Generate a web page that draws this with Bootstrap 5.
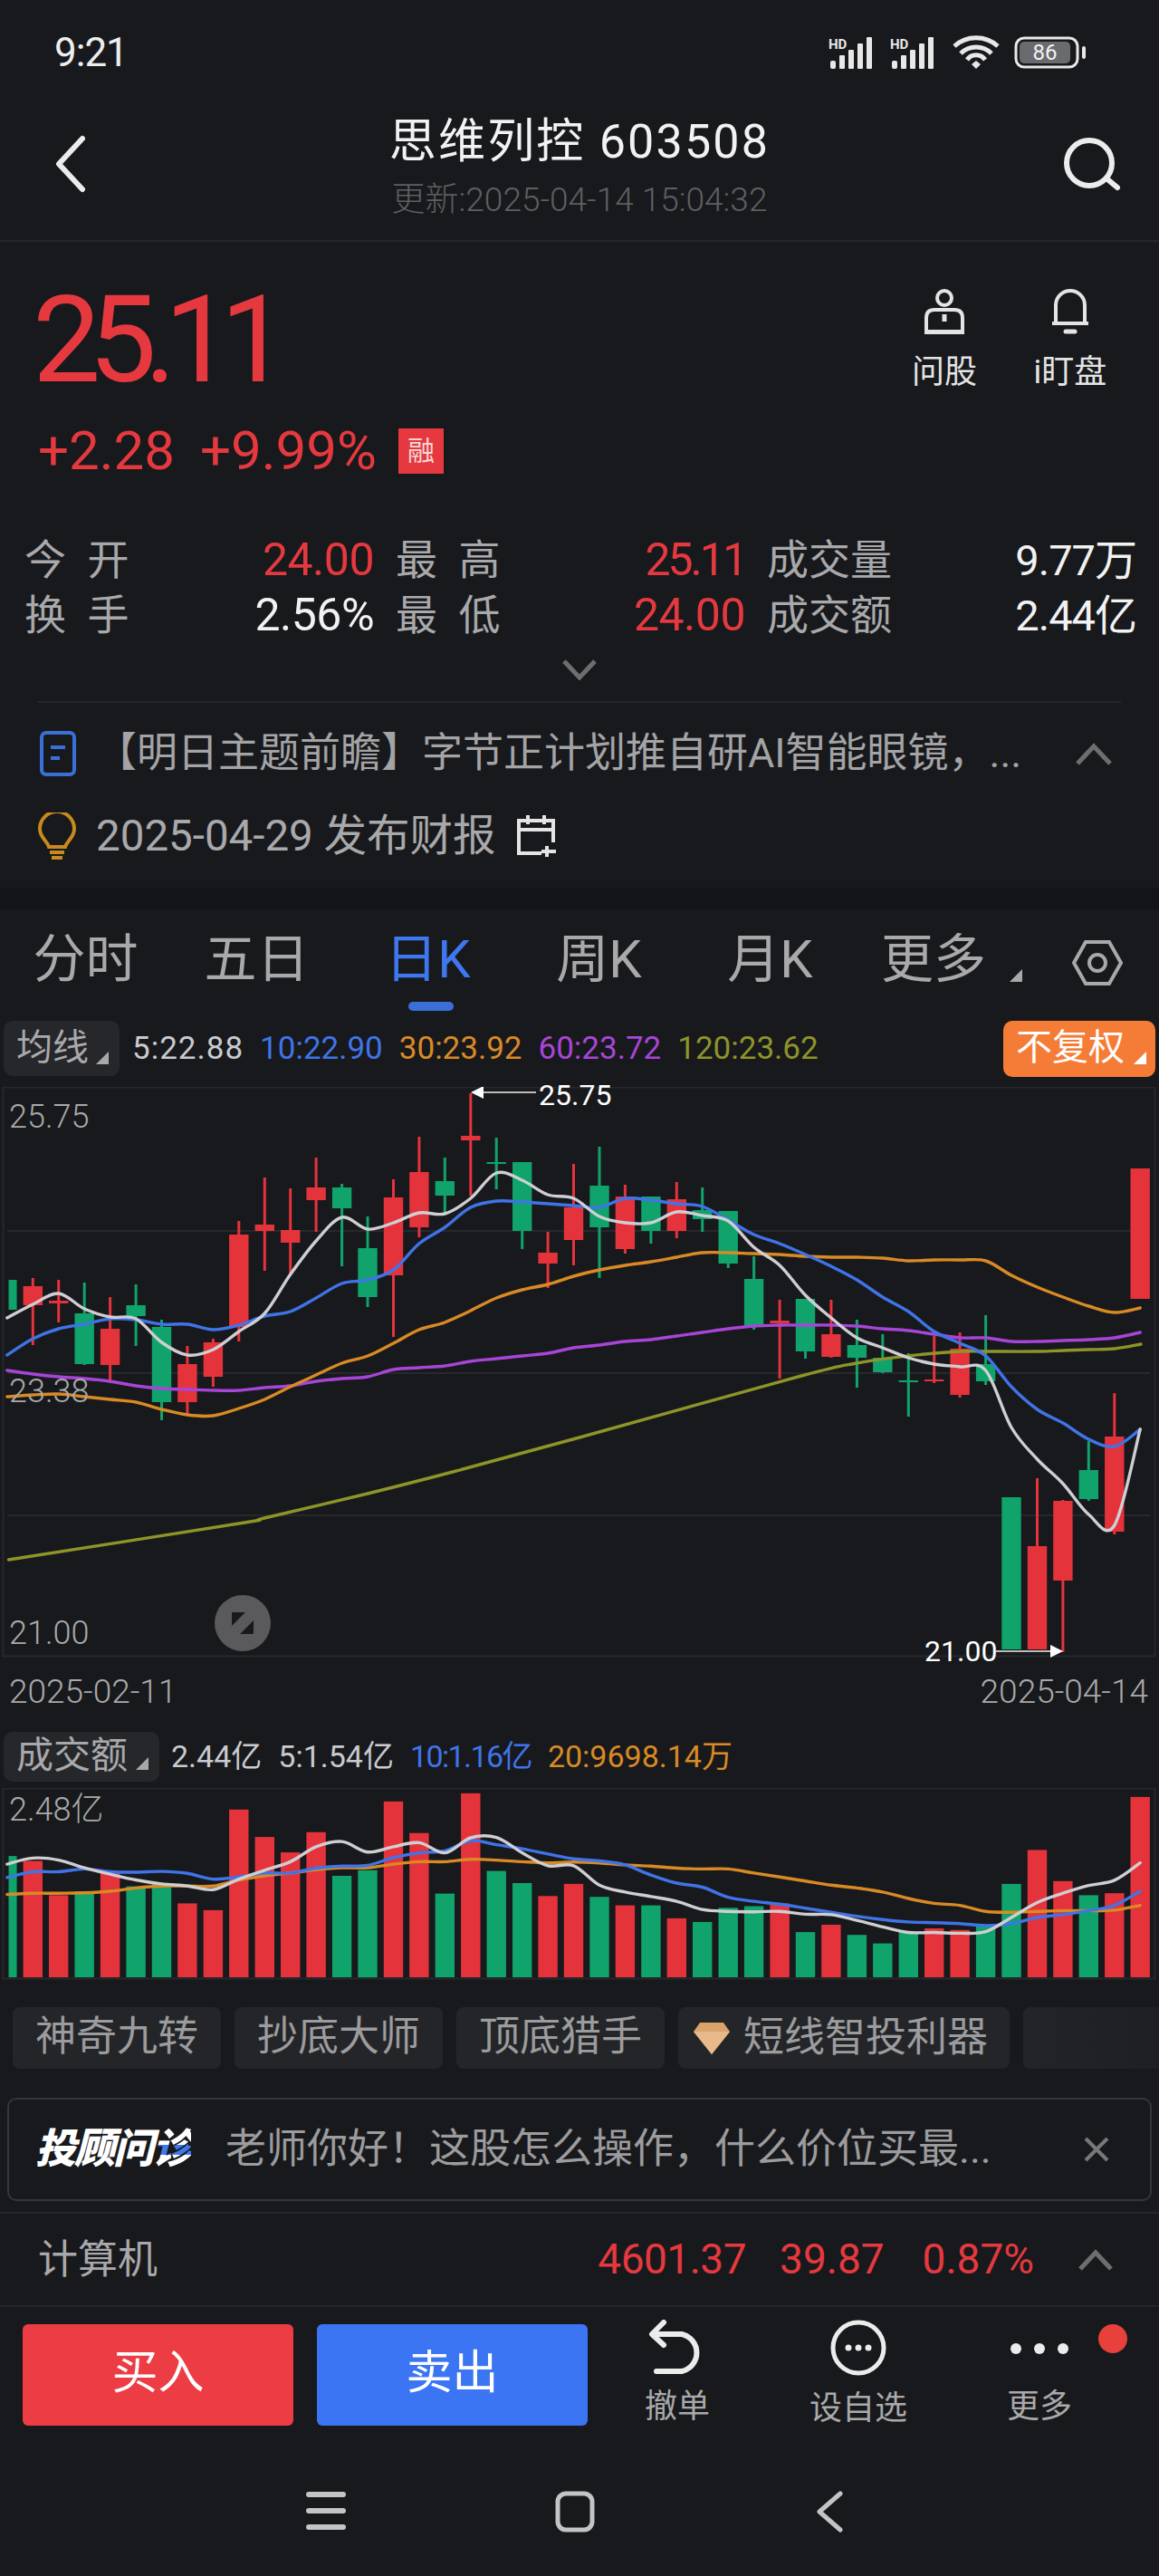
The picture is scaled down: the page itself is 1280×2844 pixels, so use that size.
<!DOCTYPE html>
<html lang="zh-CN">
<head>
<meta charset="UTF-8">
<meta name="viewport" content="width=device-width, initial-scale=1.0">
<title>思维列控 603508</title>
<link href="https://cdn.jsdelivr.net/npm/bootstrap@5.3.2/dist/css/bootstrap.min.css" rel="stylesheet">
<style>
  body { background:#18191c; color:#a9a9ab; font-family:Roboto,"Noto Sans CJK SC",sans-serif; font-weight:300; width:1280px; height:2844px; overflow:hidden; }
  .txt-red { color:#e5393f; }
  .txt-white { color:#f2f2f2; }
  .status-bar { height:122px; padding:0 80px 6px 60px; color:#eee; font-size:44px; font-weight:400; letter-spacing:-1px; }
  .app-head { height:145px; padding:0 42px 26px 58px; border-bottom:2px solid #25262a; position:relative; }
  .head-title { position:absolute; left:0; right:0; top:3px; text-align:center; color:#f2f2f2; font-size:52px; line-height:64px; font-weight:400; letter-spacing:2.2px; }
  .head-sub { position:absolute; left:0; right:0; top:79px; text-align:center; color:#5e5f62; font-size:37px; line-height:40px; }
  .price-wrap { height:320px; padding:32px 42px 0; position:relative; }
  .big-price { font-size:134px; line-height:134px; letter-spacing:-13.5px; height:134px; margin:10px 0 0 -6px; font-weight:400; }
  .price-chg { font-size:60px; line-height:64px; margin-top:23px; gap:28px; font-weight:400; }
  .rong-tag { width:50px; height:50px; background:#e5393f; color:#f6d7d7; font-size:30px; line-height:50px; text-align:center; margin-left:-4px; }
  .top-acts { position:absolute; right:52px; top:52px; gap:47px; }
  .top-act { width:92px; color:#e4e4e4; font-size:36px; line-height:44px; text-align:center; font-weight:400; }
  .top-act svg { display:block; margin:0 auto 18px; }
  .stat-grid { display:grid; grid-template-columns:386px 386px 408px; column-gap:24px; padding-left:27px; font-size:46px; line-height:61px; margin-top:1px; font-weight:400; }
  .stat-cell { display:flex; justify-content:space-between; }
  .stat-num { font-size:50px; letter-spacing:-.5px; }
  .num-tight { letter-spacing:-3px; }
  .num-last { font-size:47px; letter-spacing:-1px; }
  .sp { word-spacing:12px; }
  .more-row { height:64px; padding-top:17px; }
  .news-block { margin:0 42px; border-top:2px solid #25262a; height:206px; font-size:45px; font-weight:400; }
  .news-line { height:100px; padding-top:22px; white-space:nowrap; }
  .news-line .doc-ico { margin-top:9px; }
  .news-text { margin-left:-14px; width:1070px; color:#a4a4a6; }
  .news-fold { margin:22px 10px 0 0; }
  .fin-line { gap:22px; font-size:47.5px; line-height:56px; margin-top:19px; }
  .dark-band { height:24px; background:#131417; }
  .tab-row { height:123px; position:relative; font-size:58px; font-weight:400; }
  .tab-item { width:189px; text-align:center; line-height:64px; padding-top:23px; }
  .tab-on { color:#3f78ee; position:relative; }
  .tab-on::after { content:""; position:absolute; left:73px; top:102px; width:50px; height:10px; border-radius:5px; background:#3a6fd8; }
  .tab-more { width:172px; position:relative; }
  .corner-tri { position:absolute; width:0; height:0; border-style:solid; border-width:0 0 14px 14px; border-color:transparent transparent #a9a9ab transparent; }
  .tab-gear { position:absolute; left:1184px; top:33px; }
  .ind-row { height:73px; padding:0 4px; font-size:35px; position:relative; font-weight:400; }
  .ind-pick { background:#26272b; border-radius:10px; height:61px; line-height:59px; color:#a9a9ab; font-size:40px; padding:0 34px 0 14px; position:relative; margin-right:14px; white-space:nowrap; }
  .ind-pick .corner-tri { right:12px; bottom:13px; }
  .ma-vals { gap:18px; white-space:nowrap; }
  .c5 { color:#c9cacf; } .c10 { color:#3f74e8; } .c30 { color:#d98a25; } .c60 { color:#a845d8; } .c120 { color:#8f9428; }
  .ma-wide { letter-spacing:1px; }
  .ma-narrow { letter-spacing:-1.6px; }
  .fq-pick { position:absolute; left:1108px; top:0; width:168px; height:62px; background:#f57c37; border-radius:10px; color:#fff; font-size:40px; line-height:60px; padding-left:14px; }
  .fq-pick .corner-tri { right:10px; bottom:14px; border-bottom-color:#fff; }
  .chart-box { position:relative; height:630px; }
  .chart-box svg, .vol-box svg { display:block; }
  .axis-txt { position:absolute; left:10px; font-size:36px; line-height:40px; color:#a9a9ab; }
  .mark-txt { position:absolute; font-size:32px; line-height:36px; color:#fff; font-weight:400; }
  .swap-btn { position:absolute; left:237px; top:561px; }
  .date-row { height:82px; padding:18px 12px 0 10px; font-size:37px; line-height:40px; }
  .vol-row { height:62px; }
  .vol-row .ind-pick { height:55px; line-height:53px; margin-right:13px; padding-right:35px; font-size:41px; }
  .vol-row .ma-vals { gap:18px; font-size:34px; }
  .vol-box { position:relative; height:212px; }
  .chip-row { margin-top:30px; height:68px; padding-left:14px; gap:15px; overflow:hidden; font-size:45px; color:#9c9c9e; white-space:nowrap; font-weight:400; }
  .chip-item { background:#242528; border-radius:8px; height:68px; line-height:66px; padding:0 25px; flex:none; }
  .chip-gem { padding:0 24px 0 16px; gap:14px; }
  .chip-fade { width:200px; background:linear-gradient(90deg,#232427,#1d1e21); padding:0; }
  .ask-box { margin:32px 8px 0; height:114px; border:2px solid #34363a; border-radius:10px; padding:0 44px 0 29px; font-size:45px; color:#9c9c9e; white-space:nowrap; font-weight:400; }
  .ask-logo { color:#fff; font-size:45px; font-weight:900; font-style:italic; letter-spacing:-2px; margin-right:38px; }
  .ask-logo span { background:linear-gradient(180deg,#fff 42%,#3f78ee 42%,#3f78ee 62%,#fff 62%); -webkit-background-clip:text; background-clip:text; color:transparent; }
  .ind-line { margin-top:12px; height:105px; padding:0 51px 0 42px; border-top:2px solid #25262a; border-bottom:2px solid #25262a; font-size:44px; font-weight:400; }
  .ind-nums { gap:42px; font-size:46px; margin-right:49px; }
  .ind-first { letter-spacing:-.5px; margin-right:-5px; }
  .trade-bar { height:156px; padding:19px 0 0 25px; position:relative; }
  .trade-btn { width:299px; height:112px; border-radius:6px; color:#fff; font-size:51px; line-height:108px; text-align:center; font-weight:400; margin-right:26px; }
  .btn-buy { background:#ec3c44; } .btn-sell { background:#3b75f4; margin-right:0; }
  .trade-act { position:absolute; top:14px; width:170px; text-align:center; font-size:36px; line-height:44px; color:#a9a9ab; font-weight:400; }
  .trade-act svg { display:block; margin:0 auto 14px; }
  .red-dot { position:absolute; left:1213px; top:19px; width:32px; height:32px; border-radius:50%; background:#e8403a; }
  .nav-bar { height:141px; position:relative; }
  .nav-bar svg { position:absolute; top:47px; }
</style>
</head>
<body>

<div class="status-bar d-flex align-items-center justify-content-between">
  <div>9:21</div>
  <svg width="285" height="38" viewBox="0 0 285 38">
    <g fill="#e8e8e8">
      <text x="0" y="15" font-family="Roboto" font-size="15" font-weight="700" letter-spacing="0">HD</text>
      <rect x="2" y="28" width="6" height="9" rx="2"/><rect x="12" y="22" width="6" height="15" rx="1"/><rect x="22" y="16" width="6" height="21" rx="1"/><rect x="32" y="9" width="6" height="28" rx="1"/><rect x="42" y="2" width="6" height="35" rx="1"/>
      <text x="68" y="15" font-family="Roboto" font-size="15" font-weight="700" letter-spacing="0">HD</text>
      <rect x="70" y="28" width="6" height="9" rx="2"/><rect x="80" y="22" width="6" height="15" rx="1"/><rect x="90" y="16" width="6" height="21" rx="1"/><rect x="100" y="9" width="6" height="28" rx="1"/><rect x="110" y="2" width="6" height="35" rx="1"/>
    </g>
    <g fill="none" stroke="#e8e8e8" stroke-width="5">
      <path d="M139 12a36 36 0 0 1 48 0"/><path d="M146 20a24 24 0 0 1 34 0"/><path d="M153 27a12 12 0 0 1 20 0"/>
    </g>
    <path d="M158 32l5-4 5 4-5 5z" fill="#e8e8e8"/>
    <rect x="207" y="3" width="68" height="32" rx="9" fill="none" stroke="#e8e8e8" stroke-width="3"/>
    <rect x="211" y="7" width="56" height="24" rx="5" fill="#6a6b6e"/>
    <text x="239" y="27" text-anchor="middle" font-family="Roboto" font-size="24" font-weight="400" letter-spacing="0" fill="#f2f2f2">86</text>
    <rect x="280" y="12" width="4" height="14" rx="2" fill="#e8e8e8"/>
  </svg>
</div>

<div class="app-head d-flex align-items-center justify-content-between">
  <div class="head-title">思维列控 603508</div>
  <div class="head-sub">更新:2025-04-14 15:04:32</div>
  <svg width="40" height="64" viewBox="0 0 40 64" fill="none" stroke="#ececec" stroke-width="6" stroke-linecap="round" stroke-linejoin="round"><path d="M33 4L7 32l26 28"/></svg>
  <svg width="66" height="60" viewBox="0 0 66 60" fill="none" stroke="#ececec" stroke-width="6" stroke-linecap="round"><circle cx="31" cy="29" r="25"/><path d="M50 46l12 10"/></svg>
</div>

<div class="price-wrap">
  <div class="big-price txt-red">25.11</div>
  <div class="price-chg d-flex align-items-center txt-red">
    <span>+2.28</span><span>+9.99%</span><span class="rong-tag">融</span>
  </div>
  <div class="top-acts d-flex">
    <div class="top-act">
      <svg width="50" height="52" viewBox="0 0 50 52" fill="none" stroke="#e4e4e4" stroke-width="4"><circle cx="25" cy="10" r="8"/><path d="M5 47V32q0-9 9-9h22q9 0 9 9v15z"/><path d="M3 48h44"/><path d="M25 28v8" stroke-width="5"/></svg>
      问股
    </div>
    <div class="top-act">
      <svg width="50" height="52" viewBox="0 0 50 52" fill="none" stroke="#e4e4e4" stroke-width="4"><path d="M9 38V18a16 16 0 0 1 32 0v20z"/><path d="M5 38h40"/><path d="M20 47h10" stroke-width="5" stroke-linecap="round"/></svg>
      i盯盘
    </div>
  </div>
</div>

<div class="stat-grid">
  <div class="stat-cell"><span class="sp">今 开</span><span class="txt-red stat-num">24.00</span></div>
  <div class="stat-cell"><span class="sp">最 高</span><span class="txt-red stat-num num-tight">25.11</span></div>
  <div class="stat-cell"><span>成交量</span><span class="txt-white num-last">9.77万</span></div>
  <div class="stat-cell"><span class="sp">换 手</span><span class="txt-white stat-num">2.56%</span></div>
  <div class="stat-cell"><span class="sp">最 低</span><span class="txt-red stat-num">24.00</span></div>
  <div class="stat-cell"><span>成交额</span><span class="txt-white num-last">2.44亿</span></div>
</div>

<div class="more-row d-flex justify-content-center">
  <svg width="40" height="24" viewBox="0 0 40 24" fill="none" stroke="#6d6e70" stroke-width="5"><path d="M3 3l17 18L37 3"/></svg>
</div>

<div class="news-block">
  <div class="news-line d-flex align-items-start">
    <svg class="doc-ico" width="78" height="50" viewBox="0 0 78 50" fill="none" stroke="#3a6fd8" stroke-width="4"><rect x="4" y="2" width="36" height="46" rx="5"/><path d="M14 18h16M14 30h10"/></svg>
    <div class="news-text overflow-hidden">【明日主题前瞻】字节正计划推自研AI智能眼镜，...</div>
    <svg class="news-fold ms-auto" width="40" height="26" viewBox="0 0 40 26" fill="none" stroke="#6d6e70" stroke-width="5"><path d="M2 23L20 4l18 19"/></svg>
  </div>
  <div class="fin-line d-flex align-items-center">
    <svg width="42" height="52" viewBox="0 0 42 52" fill="none" stroke="#c8891f" stroke-width="4"><path d="M12 38c-2-7-10-10-10-20a19 19 0 0 1 38 0c0 10-8 13-10 20z"/><path d="M13 44h16M15 50h12"/></svg>
    <span>2025-04-29 发布财报</span>
    <svg width="48" height="50" viewBox="0 0 48 50" fill="none" stroke="#e4e4e4" stroke-width="4"><path d="M28 44H3V8h38v24M3 18h38M13 2v10M31 2v10M34 36v12M28 42h16"/></svg>
  </div>
</div>

<div class="dark-band"></div>

<div class="tab-row d-flex">
  <div class="tab-item">分时</div>
  <div class="tab-item">五日</div>
  <div class="tab-item tab-on">日K</div>
  <div class="tab-item">周K</div>
  <div class="tab-item">月K</div>
  <div class="tab-item tab-more">更多<span class="corner-tri" style="left:170px;top:66px"></span></div>
  <svg class="tab-gear" width="56" height="52" viewBox="0 0 56 52" fill="none" stroke="#a9a9ab" stroke-width="4"><path d="M15 3h26l13 23-13 23H15L2 26z"/><circle cx="28" cy="26" r="9"/></svg>
</div>

<div class="ind-row d-flex align-items-start">
  <div class="ind-pick">均线<span class="corner-tri"></span></div>
  <div class="ma-vals d-flex" style="line-height:61px">
    <span class="c5 ma-wide">5:22.88</span><span class="c10">10:22.90</span><span class="c30">30:23.92</span><span class="c60">60:23.72</span><span class="c120">120:23.62</span>
  </div>
  <div class="fq-pick">不复权<span class="corner-tri"></span></div>
</div>

<div class="chart-box">
  <svg id="kline" width="1280" height="630" viewBox="0 1200 1280 630"></svg>
  <div class="axis-txt" style="top:13px">25.75</div>
  <div class="axis-txt" style="top:316px">23.38</div>
  <div class="axis-txt" style="top:583px">21.00</div>
  <div class="mark-txt" style="left:595px;top:-9px">25.75</div>
  <div class="mark-txt" style="left:1021px;top:605px">21.00</div>
  <svg class="swap-btn" width="62" height="62" viewBox="0 0 62 62"><circle cx="31" cy="31" r="31" fill="#5a5a5c"/><path d="M19 19h15L19 34zM43 43H28l15-15z" fill="#18191c"/></svg>
</div>

<div class="date-row d-flex justify-content-between"><span>2025-02-11</span><span>2025-04-14</span></div>

<div class="ind-row vol-row d-flex align-items-start">
  <div class="ind-pick">成交额<span class="corner-tri"></span></div>
  <div class="ma-vals d-flex" style="line-height:55px">
    <span class="c5">2.44亿</span><span class="c5">5:1.54亿</span><span class="c10 ma-narrow">10:1.16亿</span><span class="c30">20:9698.14万</span>
  </div>
</div>

<div class="vol-box">
  <svg id="volume" width="1280" height="212" viewBox="0 1973 1280 212"></svg>
  <div class="axis-txt" style="top:4px">2.48亿</div>
</div>

<div class="chip-row d-flex">
  <div class="chip-item">神奇九转</div>
  <div class="chip-item">抄底大师</div>
  <div class="chip-item">顶底猎手</div>
  <div class="chip-item chip-gem d-flex align-items-center">
    <svg width="42" height="36" viewBox="0 0 42 36"><path d="M8 1h26l7 10-20 25L1 11z" fill="#d9a36c"/><path d="M1 11h40L21 36z" fill="#e8b98a"/></svg>
    短线智投利器
  </div>
  <div class="chip-item chip-fade"></div>
</div>

<div class="ask-box d-flex align-items-center">
  <span class="ask-logo">投顾问<span>诊</span></span>
  <span>老师你好！这股怎么操作，什么价位买最...</span>
  <svg class="ms-auto" width="30" height="30" viewBox="0 0 30 30" fill="none" stroke="#77787a" stroke-width="4"><path d="M3 3l24 24M27 3L3 27"/></svg>
</div>

<div class="ind-line d-flex align-items-center">
  <span>计算机</span>
  <div class="ind-nums d-flex txt-red ms-auto"><span class="ind-first">4601.37</span><span>39.87</span><span>0.87%</span></div>
  <svg width="38" height="24" viewBox="0 0 38 24" fill="none" stroke="#6d6e70" stroke-width="5"><path d="M2 22L19 4l17 18"/></svg>
</div>

<div class="trade-bar d-flex align-items-start">
  <div class="trade-btn btn-buy">买入</div>
  <div class="trade-btn btn-sell">卖出</div>
  <div class="trade-act" style="left:663px">
    <svg width="66" height="60" viewBox="0 0 66 60" fill="none" stroke="#ececec" stroke-width="6" stroke-linecap="round" stroke-linejoin="round"><path d="M18 3L5 16l13 12"/><path d="M6 16h32a21 21 0 0 1 0 41H10"/></svg>
    撤单
  </div>
  <div class="trade-act" style="left:863px">
    <svg width="62" height="62" viewBox="0 0 62 62"><circle cx="31" cy="31" r="28" fill="none" stroke="#ececec" stroke-width="5"/><circle cx="20" cy="31" r="3.5" fill="#ececec"/><circle cx="31" cy="31" r="3.5" fill="#ececec"/><circle cx="42" cy="31" r="3.5" fill="#ececec"/></svg>
    设自选
  </div>
  <div class="trade-act" style="left:1063px">
    <svg width="70" height="60" viewBox="0 0 70 60"><circle cx="9" cy="32" r="6" fill="#ececec"/><circle cx="35" cy="32" r="6" fill="#ececec"/><circle cx="61" cy="32" r="6" fill="#ececec"/></svg>
    更多
  </div>
  <div class="red-dot"></div>
</div>

<div class="nav-bar">
  <svg style="left:338px" width="44" height="44" viewBox="0 0 44 44" fill="none" stroke="#c4c4c6" stroke-width="6" stroke-linecap="round"><path d="M3 4h38M3 22h38M3 40h38"/></svg>
  <svg style="left:612px" width="46" height="46" viewBox="0 0 46 46" fill="none" stroke="#c4c4c6" stroke-width="5"><rect x="4" y="3" width="38" height="40" rx="9"/></svg>
  <svg style="left:900px" width="32" height="46" viewBox="0 0 32 46" fill="none" stroke="#c4c4c6" stroke-width="5" stroke-linecap="round" stroke-linejoin="round"><path d="M28 3L5 23l23 20"/></svg>
</div>

<script>
  const RED = "#e5333b", GREEN = "#10a36b", GRID = "#27282b";
  const MA_COLORS = { w: "#cfcfd3", b: "#3f74e8", o: "#d98a25", p: "#a845d8", y: "#8f9428" };

  // x of the i-th day, day 0 is cut by the left edge
  const dayX = (i) => 36.3 + (i - 1) * 28.44;

  // color, body top, body bottom, wick top, wick bottom (page px)
  const candles = [
    ["g",1413,1446,1413,1446],["r",1420,1441,1411,1485],["r",1436,1439,1413,1460],["g",1450,1506,1416,1507],
    ["r",1467,1507,1432,1527],["g",1441,1453,1418,1486],["g",1465,1548,1457,1568],["r",1506,1548,1486,1561],
    ["r",1482,1520,1478,1531],["r",1363,1465,1348,1481],["r",1352,1359,1300,1403],["r",1358,1372,1312,1407],
    ["r",1311,1325,1278,1360],["g",1311,1334,1307,1398],["g",1378,1432,1343,1443],["r",1322,1408,1302,1476],
    ["r",1294,1355,1255,1366],["g",1304,1320,1278,1340],["r",1254,1259,1207,1320],["g",1283,1285,1256,1313],
    ["g",1283,1359,1283,1379],["r",1383,1395,1360,1422],["r",1333,1369,1285,1397],["g",1309,1355,1266,1411],
    ["r",1321,1379,1308,1384],["g",1321,1359,1321,1373],["r",1324,1359,1305,1367],["g",1336,1346,1311,1360],
    ["g",1337,1395,1337,1400],["g",1412,1464,1387,1468],["r",1458,1461,1435,1522],["g",1434,1492,1434,1500],
    ["r",1473,1498,1435,1499],["g",1485,1499,1457,1532],["g",1499,1515,1473,1516],["g",1524,1526,1494,1564],
    ["r",1523,1525,1475,1527],["r",1489,1540,1471,1543],["g",1506,1525,1452,1529],["g",1653,1821,1653,1821],
    ["r",1707,1821,1632,1821],["r",1657,1745,1656,1824],["g",1623,1655,1591,1657],["r",1586,1691,1538,1694],
    ["r",1290,1434,1290,1434]
  ];

  const maMain = {
    p: [1513,1517,1520,1522,1525,1530,1533,1534,1535,1535,1532,1530,1525,1522,1520,1512,1510,1508,1503,1500,1497,1494,1488,1485,1481,1479,1475,1471,1467,1464,1463,1463,1463,1464,1467,1469,1473,1477,1477,1481,1481,1480,1479,1477,1471],
    o: [1542,1540,1539,1542,1545,1548,1556,1562,1563,1555,1545,1531,1518,1505,1497,1483,1468,1460,1447,1433,1424,1418,1409,1402,1397,1393,1388,1383,1383,1384,1385,1387,1388,1388,1389,1392,1391,1391,1392,1408,1421,1432,1442,1449,1444],
    b: [1496,1478,1467,1462,1456,1457,1462,1462,1468,1463,1453,1448,1433,1417,1413,1402,1373,1355,1333,1326,1327,1329,1331,1333,1323,1325,1329,1332,1347,1363,1373,1385,1398,1413,1432,1448,1470,1483,1497,1531,1556,1571,1589,1597,1578],
    w: [1455,1440,1428,1445,1454,1456,1482,1496,1490,1470,1450,1407,1370,1344,1357,1350,1339,1340,1323,1295,1303,1319,1323,1343,1350,1350,1338,1342,1348,1377,1397,1430,1455,1477,1488,1499,1506,1509,1513,1576,1611,1638,1672,1684,1578]
  };
  const olive = [[9.5,1722],[264,1682],[292,1676],[406,1649],[500,1625],[640,1587],[885,1519],[946,1505],[1003,1497],[1060,1492],[1089,1492],[1146,1492],[1174,1491],[1202,1490],[1231,1489],[1260,1484]];

  const volTops = [1183,1195,1280,1270,1225,1258,1250,1300,1317,1068,1136,1174,1124,1232,1218,1048,1126,1276,1028,1220,1250,1282,1252,1284,1305,1305,1337,1346,1311,1307,1300,1371,1353,1378,1399,1370,1362,1366,1357,1252,1168,1245,1280,1275,1037];
  const volMa = {
    o: [1278,1275,1275,1274,1270,1262,1257,1257,1257,1242,1232,1225,1217,1212,1212,1203,1197,1197,1191,1193,1197,1200,1198,1200,1205,1208,1213,1215,1215,1225,1235,1245,1255,1262,1272,1288,1300,1305,1320,1322,1320,1318,1318,1317,1305],
    b: [1236,1222,1222,1215,1222,1223,1221,1226,1240,1235,1225,1225,1213,1208,1206,1187,1175,1170,1145,1155,1165,1178,1190,1195,1205,1230,1250,1260,1285,1295,1302,1312,1322,1332,1340,1346,1348,1350,1355,1350,1335,1328,1318,1305,1270],
    w: [1203,1188,1193,1212,1228,1242,1252,1257,1266,1240,1218,1197,1160,1147,1173,1160,1150,1175,1138,1137,1175,1207,1207,1255,1272,1283,1295,1315,1320,1321,1320,1327,1328,1342,1358,1372,1372,1374,1370,1335,1298,1275,1256,1243,1200]
  };
  const volY = (z) => 1520 + z / 2.24;

  // smooth line through the points
  function curve(pts) {
    let d = `M${pts[0][0]} ${pts[0][1]}`;
    for (let i = 0; i < pts.length - 1; i++) {
      const p0 = pts[i - 1] || pts[i], p1 = pts[i], p2 = pts[i + 1], p3 = pts[i + 2] || p2;
      const c1x = p1[0] + (p2[0] - p0[0]) / 6, c1y = p1[1] + (p2[1] - p0[1]) / 6;
      const c2x = p2[0] - (p3[0] - p1[0]) / 6, c2y = p2[1] - (p3[1] - p1[1]) / 6;
      d += `C${c1x.toFixed(1)} ${c1y.toFixed(1)} ${c2x.toFixed(1)} ${c2y.toFixed(1)} ${p2[0].toFixed(1)} ${p2[1].toFixed(1)}`;
    }
    return d;
  }
  const linePath = (d, color) => `<path d="${d}" fill="none" stroke="${color}" stroke-width="3.4" stroke-linejoin="round" stroke-linecap="round"/>`;
  const rect = (x, y, w, h, fill) => `<rect x="${x.toFixed(1)}" y="${y}" width="${w}" height="${h}" fill="${fill}"/>`;

  function drawKline() {
    let s = `<rect x="3.5" y="1200.5" width="1272" height="628" fill="none" stroke="${GRID}" stroke-width="2"/>`;
    [1358, 1515, 1672].forEach((y) => { s += rect(8, y, 1262, 2, GRID); });
    candles.forEach((c, i) => {
      const x = dayX(i), col = c[0] === "r" ? RED : GREEN;
      const left = Math.max(x - 10.7, 9.5), w = x - 10.7 < 9.5 ? x + 10.7 - 9.5 : 21.4;
      if (i > 0) s += rect(x - 1.5, c[3], 3, c[4] - c[3], col);
      s += rect(left, c[1], w, c[2] - c[1], col);
    });
    s += linePath(curve(olive), MA_COLORS.y);
    ["p", "o", "b", "w"].forEach((k) => {
      s += linePath(curve(maMain[k].map((y, i) => [dayX(i), y])), MA_COLORS[k]);
    });
    // high and low markers
    s += `<path d="M533 1206H592" stroke="#bbb" stroke-width="2"/><path d="M520 1206l14-7v14z" fill="#fff"/>`;
    s += `<path d="M1100 1823H1161" stroke="#bbb" stroke-width="2"/><path d="M1174 1823l-14-7v14z" fill="#fff"/>`;
    document.getElementById("kline").innerHTML = s;
  }

  function drawVolume() {
    let s = `<rect x="3.5" y="1973.5" width="1272" height="210" fill="none" stroke="${GRID}" stroke-width="2"/>`;
    volTops.forEach((z, i) => {
      const x = dayX(i), top = volY(z), col = candles[i][0] === "r" ? RED : GREEN;
      const left = Math.max(x - 10.7, 9.5), w = x - 10.7 < 9.5 ? x + 10.7 - 9.5 : 21.4;
      s += rect(left, top.toFixed(1), w, (2182 - top).toFixed(1), col);
    });
    ["o", "b", "w"].forEach((k) => {
      s += linePath(curve(volMa[k].map((z, i) => [dayX(i), volY(z)])), MA_COLORS[k]);
    });
    document.getElementById("volume").innerHTML = s;
  }

  drawKline();
  drawVolume();
</script>
<script src="https://cdn.jsdelivr.net/npm/bootstrap@5.3.2/dist/js/bootstrap.bundle.min.js"></script>
</body>
</html>
